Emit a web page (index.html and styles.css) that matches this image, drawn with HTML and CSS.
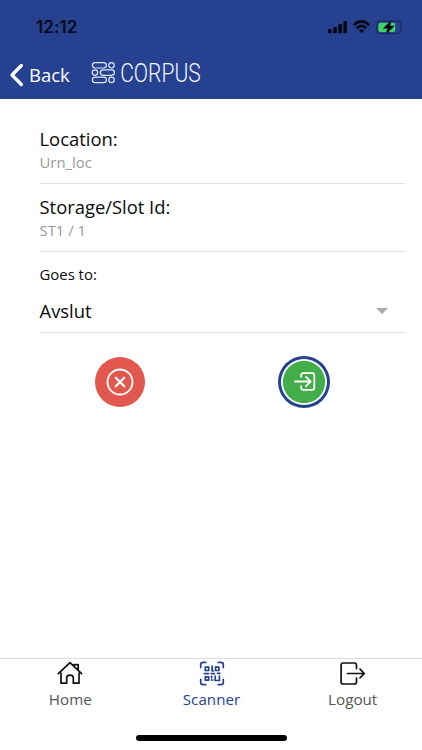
FILE: index.html
```html
<!DOCTYPE html>
<html lang="en">
<head>
<meta charset="utf-8">
<title>Corpus Scanner</title>
<link rel="stylesheet" href="styles.css">
</head>
<body>
<div class="app">
  <header class="header">
    <div class="status">
      <span class="clock">12:12</span>
      <svg class="status-icons" width="76" height="16" viewBox="327 19 76 16">
        <rect x="328" y="29" width="3.6" height="4.2" rx="1"/>
        <rect x="333.2" y="27" width="3.6" height="6.2" rx="1"/>
        <rect x="338.4" y="24" width="3.6" height="9.2" rx="1"/>
        <rect x="343.4" y="21" width="3.6" height="12.2" rx="1"/>
        <path class="wifi" d="M353.9 25.1Q361.5 17.7 369.1 25.1M356.8 28.1Q361.5 23.7 366.2 28.1"/>
        <path d="M358.8 30.4Q361.5 28.2 364.2 30.4L361.5 33.1Z"/>
        <rect class="battery" x="377" y="21.2" width="23.6" height="12.4" rx="3.5"/>
        <path class="tip" d="M401.8 25.4v3.8q1.6-1.9 0-3.8z"/>
        <rect class="charge" x="378.4" y="22.7" width="16.8" height="9.4" rx="2"/>
        <path class="bolt" d="M391.2 20.6L383.4 28.3H387.6L386.2 34L394.3 26H390Z"/>
      </svg>
    </div>
    <div class="nav">
      <svg class="chevron" width="15" height="24" viewBox="0 0 15 24"><path d="M12.4 2.5L3 12L12.4 21.5"/></svg>
      <span class="back">Back</span>
      <svg class="brand" width="116" height="36" viewBox="91 55 116 36">
        <g class="mark">
          <rect x="92.4" y="62.6" width="14" height="5.4" rx="2.7"/><circle cx="111.5" cy="65.3" r="2.7"/>
          <circle cx="95" cy="72.6" r="2.7"/><rect x="100.4" y="69.9" width="14" height="5.4" rx="2.7"/>
          <rect x="92.4" y="77.2" width="14" height="5.4" rx="2.7"/><circle cx="111.5" cy="79.9" r="2.7"/>
        </g>
        <text x="120.2" y="81.6" textLength="80.5" lengthAdjust="spacingAndGlyphs">CORPUS</text>
      </svg>
    </div>
  </header>
  <main class="content">
    <section class="field">
      <div class="label">Location:</div>
      <div class="value">Urn_loc</div>
    </section>
    <section class="field">
      <div class="label clipped">Storage/Slot Id:</div>
      <div class="value">ST1 / 1</div>
    </section>
    <section class="select">
      <div class="caption">Goes to:</div>
      <div class="choice"><span>Avslut</span><i class="caret"></i></div>
    </section>
    <div class="actions">
      <svg width="54" height="54" viewBox="0 0 54 54">
        <circle class="red" cx="27" cy="27" r="25"/>
        <circle class="line" cx="27" cy="27" r="12.5"/>
        <path class="line cross" d="M22.8 22.8L31.2 31.2M31.2 22.8L22.8 31.2"/>
      </svg>
      <svg width="54" height="54" viewBox="0 0 54 54">
        <circle class="blue" cx="27" cy="27" r="26"/>
        <circle class="white" cx="27" cy="27" r="23"/>
        <circle class="green" cx="27" cy="27" r="21.2"/>
        <path class="line" d="M24.2 21.8V20.2Q24.2 18.1 26.3 18.1H35.2Q37.3 18.1 37.3 20.2V32.8Q37.3 34.9 35.2 34.9H26.3Q24.2 34.9 24.2 32.8V31.2M18 26.5H33M29 21.8L33.6 26.5L29 31.2"/>
      </svg>
    </div>
  </main>
  <footer class="tabs">
    <div class="tab">
      <svg width="28" height="28" viewBox="0 0 28 28"><path d="M2.3 13.6L14 2.6L25.6 13.6M5 13.2V23.2H10.7V17.6Q10.7 15.1 14 15.1T17.3 17.6V23.2H23V13.2M18 5.7V4.7H22.2V9.8"/></svg>
      <span>Home</span>
    </div>
    <div class="tab active">
      <svg width="28" height="28" viewBox="0 0 28 28"><path d="M2.7 7.6V4.8Q2.7 2.4 5.1 2.4H7.8M20.2 2.4H22.9Q25.3 2.4 25.3 4.8V7.6M2.7 19.4V22.2Q2.7 24.6 5.1 24.6H7.8M20.2 24.6H22.9Q25.3 24.6 25.3 22.2V19.4M7.3 7.1H10.7V10.5H7.3ZM17.5 7.1H20.9V10.5H17.5ZM7.3 16.8H10.7V20.2H7.3ZM14.1 6V10.8H15.2M6.3 13.6H10.5M13.2 13.6H16.4M19.5 13.3H21.8M13.6 16.3V17.8M13.6 20H14.9M17.2 16V20.5H21.4V16.2"/></svg>
      <span>Scanner</span>
    </div>
    <div class="tab">
      <svg width="28" height="28" viewBox="0 0 28 28"><path d="M17.5 8.6V5.1Q17.5 3 15.4 3H4.2Q2.1 3 2.1 5.1V21.9Q2.1 24 4.2 24H15.4Q17.5 24 17.5 21.9V18.2M8.5 13.5H25M21 9.2L25.3 13.5L21 17.8"/></svg>
      <span>Logout</span>
    </div>
  </footer>
  <div class="home-bar"></div>
</div>
</body>
</html>
```
FILE: styles.css
```css
* { box-sizing: border-box; }
body { margin: 0; background: #fff; font-family: "Open Sans", sans-serif; color: #0b0b0b; }
svg { display: block; flex: none; }
.app { width: 422px; height: 750px; display: flex; flex-direction: column; overflow: hidden; }
.header { height: 99px; flex: none; background: #25418f; }
.status { height: 54px; padding: 0 19px 0 36px; display: flex; align-items: center; justify-content: space-between; }
.clock { font: 600 17px/20px Inter, sans-serif; letter-spacing: .1px; color: #050a18; }
.status-icons { fill: #030711; }
.wifi { fill: none; stroke: #030711; stroke-width: 2.5; }
.battery { fill: none; stroke: #172b60; stroke-width: 1.2; }
.tip { fill: #172b60; }
.charge { fill: #42d365; }
.bolt { stroke: #25418f; stroke-width: .8; paint-order: stroke; }
.nav { height: 45px; display: flex; align-items: center; padding: 0 0 3px 9px; color: #fff; }
.chevron { fill: none; stroke: #fff; stroke-width: 3.4; stroke-linecap: round; stroke-linejoin: round; }
.back { width: 67px; padding-left: 5px; font-size: 18.5px; line-height: 26px; }
.brand { margin-top: -4px; }
.mark { fill: none; stroke: #dfe8ff; stroke-width: 1.2; }
.brand text { font: 300 25px Roboto, sans-serif; fill: #f4f7ff; }
.content { flex: 1; padding: 26px 16px 0 39.5px; }
.field { height: 68px; padding-top: 3px; border-bottom: 1px solid #e3e3e3; }
.field:first-child { height: 59px; }
.field + .field { padding-top: 12px; }
.label { font-size: 18.4px; line-height: 22px; }
.clipped { overflow: hidden; }
.value { font-size: 14.9px; line-height: 22px; padding-top: 1px; color: #999; }
.select { height: 81px; border-bottom: 1px solid #e3e3e3; padding-top: 11px; }
.caption { font-size: 14.9px; line-height: 22px; }
.choice { display: flex; justify-content: space-between; align-items: center; margin-top: 12px; padding-right: 18px; font-size: 18.4px; line-height: 28px; }
.caret { border: 6px solid transparent; border-top-color: #aaa; border-bottom: 0; margin-top: -1px; }
.actions { display: flex; justify-content: space-between; padding: 21.5px 75px 0 53px; }
.red { fill: #e2574e; }
.blue { fill: #25418f; }
.white { fill: #fff; }
.green { fill: #42ad49; }
.line { fill: none; stroke: #fff; stroke-width: 1.8; stroke-linecap: round; stroke-linejoin: round; }
.cross { stroke-width: 2.3; }
.tabs { height: 62px; flex: none; border-top: 1px solid #ddd; display: flex; }
.tab { width: 141px; display: flex; flex-direction: column; align-items: center; padding-top: 1px; font-size: 15.2px; line-height: 22px; color: #555; }
.tab + .tab { padding-left: 1px; }
.tab:last-child { padding-left: 2px; }
.tab svg { fill: none; stroke: #111; stroke-width: 1.7; stroke-linecap: round; stroke-linejoin: round; }
.tab.active { color: #25418f; }
.tab.active svg { stroke: #25418f; }
.home-bar { width: 151px; height: 6px; flex: none; border-radius: 3px; background: #000; margin: 15px auto 9px; }
```
